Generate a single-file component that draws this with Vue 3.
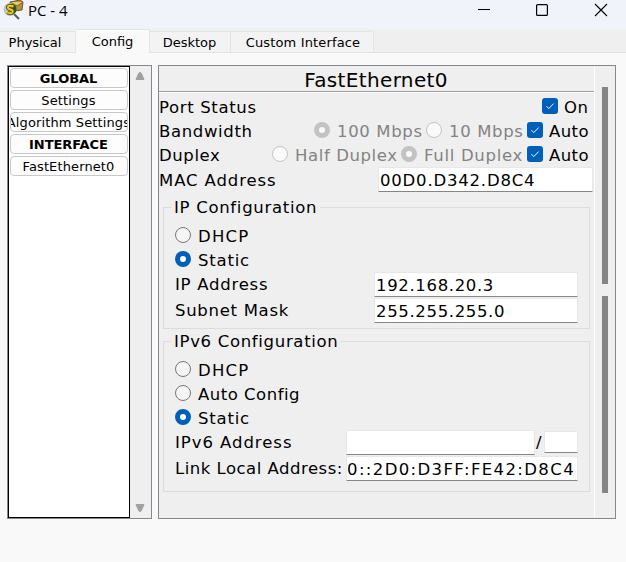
<script setup>
import { ref } from 'vue'

const tabs = ['Physical', 'Config', 'Desktop', 'Custom Interface']
const activeTab = ref('Config')
const menu = [
  { text: 'GLOBAL', heading: true },
  { text: 'Settings' },
  { text: 'Algorithm Settings' },
  { text: 'INTERFACE', heading: true },
  { text: 'FastEthernet0' },
]
</script>

<template>
  <div class="window">
    <header class="titlebar">
      <svg class="app-icon" width="22" height="22" viewBox="0 0 22 22">
        <path d="M7 2 17 0l3 2-1 8-8 1-4-3z" fill="#b8903c" stroke="#4d3c18" stroke-width=".8" />
        <path d="m7 2 7 4 6-4" fill="#e7c675" stroke="#6b5320" stroke-width=".8" />
        <path d="m11 14 5 5" stroke="#555b5e" stroke-width="2" />
        <circle cx="7" cy="9.500" r="6" fill="#c3cebc" stroke="#a3b09c" stroke-width=".7" />
        <path d="M8 4q6 0 5.500 6-1 4-4 4z" fill="#1f5b25" />
        <path d="M10.500 6.500Q5 4.500 4.800 7.500c0 2.500 5.200 1.500 5 4-.2 2.200-3.500 2-5.500 1" fill="none" stroke="#5b4a08" stroke-width="3.600" />
        <path d="M10.500 6.500Q5 4.500 4.800 7.500c0 2.500 5.200 1.500 5 4-.2 2.200-3.500 2-5.500 1" fill="none" stroke="#f0cf20" stroke-width="1.900" />
      </svg>
      <span class="title">PC - 4</span>
      <svg class="controls" width="132" height="20" viewBox="0 0 132 20">
        <path d="M0 9.500h12" stroke="#000" fill="none" />
        <rect x="58.600" y="4.600" width="10.800" height="10.800" rx="1" stroke="#000" stroke-width="1.200" fill="none" />
        <path d="m117 4 12 12m0-12-12 12" stroke="#000" stroke-width="1.100" fill="none" />
      </svg>
    </header>

    <nav class="tabs">
      <div v-for="(t, i) in tabs" :key="t" :class="['tab', 'tab-' + i, { active: t === activeTab }]">{{ t }}</div>
    </nav>

    <main class="body">
      <aside class="side">
        <div class="list">
          <div v-for="m in menu" :key="m.text" :class="['item', { heading: m.heading }]"><span>{{ m.text }}</span></div>
        </div>
        <div class="side-scroll">
          <svg width="10" height="8" viewBox="0 0 10 8"><path d="M1 7.500 4 .8h2l3 6.700z" fill="#a0a0a0" stroke="#a0a0a0" stroke-linejoin="round" /></svg>
          <svg width="10" height="8" viewBox="0 0 10 8"><path d="M1 .5 4 7.200h2L9 .5z" fill="#a0a0a0" stroke="#a0a0a0" stroke-linejoin="round" /></svg>
        </div>
      </aside>

      <section class="panel">
        <div class="form">
          <h1 class="heading-bar"><span>FastEthernet0</span></h1>
          <div class="row first">
            <span class="w-port">Port Status</span>
            <div class="right">
              <i class="check"><svg viewBox="0 0 16 16"><path d="m4.500 8.200 2.300 2.400 4.800-5" /></svg></i>
              <span class="lbl on">On</span>
            </div>
          </div>
          <div class="row">
            <span class="w-band">Bandwidth</span>
            <div class="right">
              <i class="radio off sel"></i><span class="lbl dim m100">100 Mbps</span>
              <i class="radio off"></i><span class="lbl dim m10">10 Mbps</span>
              <i class="check"><svg viewBox="0 0 16 16"><path d="m4.500 8.200 2.300 2.400 4.800-5" /></svg></i><span class="lbl auto">Auto</span>
            </div>
          </div>
          <div class="row">
            <span class="w-dup">Duplex</span>
            <div class="right">
              <i class="radio off"></i><span class="lbl dim half">Half Duplex</span>
              <i class="radio off sel"></i><span class="lbl dim full">Full Duplex</span>
              <i class="check"><svg viewBox="0 0 16 16"><path d="m4.500 8.200 2.300 2.400 4.800-5" /></svg></i><span class="lbl auto">Auto</span>
            </div>
          </div>
          <div class="row mac">
            <span class="w-mac">MAC Address</span>
            <div class="field f-mac"><span>00D0.D342.D8C4</span></div>
          </div>

          <fieldset class="group g4">
            <legend>IP Configuration</legend>
            <div class="opt"><i class="radio"></i><span class="dhcp">DHCP</span></div>
            <div class="opt"><i class="radio sel"></i><span class="static">Static</span></div>
            <div class="line"><span class="w-ip">IP Address</span><div class="field f-ip"><span>192.168.20.3</span></div></div>
            <div class="line"><span class="w-mask">Subnet Mask</span><div class="field f-ip"><span>255.255.255.0</span></div></div>
          </fieldset>

          <fieldset class="group g6">
            <legend>IPv6 Configuration</legend>
            <div class="opt"><i class="radio"></i><span class="dhcp">DHCP</span></div>
            <div class="opt"><i class="radio"></i><span class="autoconf">Auto Config</span></div>
            <div class="opt"><i class="radio sel"></i><span class="static">Static</span></div>
            <div class="line">
              <span class="w-six">IPv6 Address</span>
              <div class="pair"><div class="field f-six"></div><span class="slash">/</span><div class="field f-prefix"></div></div>
            </div>
            <div class="line"><span class="w-link">Link Local Address:</span><div class="field f-link"><span>0::2D0:D3FF:FE42:D8C4</span></div></div>
          </fieldset>
        </div>
        <div class="scroll"><i class="thumb"></i><i class="thumb"></i></div>
      </section>
    </main>
  </div>
</template>

<style>
body { margin: 0; background: #f9f9f9; }
</style>

<style scoped>
* { box-sizing: border-box; }
.window { width: 626px; height: 562px; overflow: hidden; background: #f9f9f9; color: #000; font-family: "DejaVu Sans", sans-serif; font-size: 16.5px; letter-spacing: .4px; white-space: nowrap; }
.titlebar { height: 29px; background: #f0f3fa; display: flex; align-items: flex-start; padding-left: 3px; }
.title { font: 15px/20px "Open Sans", sans-serif; letter-spacing: 0; margin-left: 3px; }
.controls { margin-left: auto; margin-right: 16px; }
.tabs { height: 24px; background: #efefef; border-bottom: 1px solid #e2e2e2; display: flex; align-items: flex-end; font-size: 13px; letter-spacing: 0; }
.tab { height: 21px; line-height: 22px; text-align: center; border-top: 1px solid #e5e5e5; border-right: 1px solid #e5e5e5; background: #f3f3f3; }
.tab.active { height: 24px; margin-bottom: -1px; background: #f9f9f9; line-height: 23px; }
.tab-0 { width: 76px; padding-right: 5px; }
.tab-1 { width: 74px; }
.tab-2 { width: 81px; padding-right: 1px; }
.tab-3 { width: 143px; letter-spacing: .15px; padding-left: 2px; }
.body { display: flex; gap: 6px; padding: 12px 10px 0 7px; }
.side { width: 145px; height: 454px; border: 1px solid #828790; background: #efefef; display: flex; }
.list { width: 122px; border: 1px solid #000; background: #fff; padding: 1px; display: flex; flex-direction: column; gap: 2px; }
.item { height: 20px; border: 1px solid #c8c8c8; border-radius: 4px; background: #fdfdfd; font-size: 13px; letter-spacing: .12px; line-height: 19px; display: flex; justify-content: center; overflow: hidden; padding-right: 1px; }
.heading { font-weight: bold; letter-spacing: -.05px; }
.side-scroll { flex: 1; display: flex; flex-direction: column; justify-content: space-between; align-items: center; padding: 6px 1px 6px 0; }
.panel { width: 458px; height: 454px; border: 1px solid #828790; background: #efefef; display: flex; }
.form { width: 436px; border-right: 1px solid #fff; }
.heading-bar { margin: 0; height: 27px; border-bottom: 1px solid #fff; box-shadow: inset 0 -1px #a0a0a0; font-size: 20px; font-weight: normal; letter-spacing: .35px; line-height: 28px; text-align: center; padding-right: 1px; }
.row { height: 24px; display: flex; align-items: center; justify-content: space-between; line-height: 24px; padding-right: 5px; }
.row > span { padding-top: 1px; }
.first { margin-top: 2px; }
.first .check { margin-bottom: 2px; }
.mac { height: 25px; padding-right: 1px; }
.mac > span { padding-top: 2px; }
.w-port { letter-spacing: .65px; }
.w-band { letter-spacing: .65px; }
.w-dup { letter-spacing: .6px; }
.w-mac { letter-spacing: .9px; }
.right { display: flex; align-items: center; }
.right .check, .right .radio { position: relative; top: -1px; }
.first .check { top: 0; }
.lbl { padding-left: 6px; padding-top: 1px; }
.on { width: 31px; }
.auto { width: 46px; }
.dim { color: #838383; padding-left: 7px; }
.m100 { width: 96px; letter-spacing: .65px; }
.m10 { width: 85px; letter-spacing: .65px; }
.half { width: 113px; letter-spacing: .6px; }
.full { width: 110px; letter-spacing: .7px; }
.radio { flex: none; width: 16px; height: 16px; border-radius: 50%; border: 1px solid #777; background: #f5f5f5; }
.radio.sel { border: 5px solid #005fb8; background: #fff; }
.radio.off { border-color: #c3c3c3; background: #fafafa; }
.check { flex: none; width: 16px; height: 16px; border-radius: 3px; background: #005fb8; }
.check svg { display: block; width: 16px; height: 16px; fill: none; stroke: #fff; stroke-width: 1; }
.field { height: 25px; background: #fff; border: 1px solid #e8e8e8; border-bottom-color: #868686; border-radius: 1px; padding-left: 2px; line-height: 25px; overflow: hidden; }
.f-mac { width: 215px; padding-left: 1px; letter-spacing: .8px; }
.f-ip { width: 204px; padding-left: 1px; letter-spacing: .65px; }
.f-link { width: 232px; padding-left: 0; letter-spacing: 1.38px; }
.f-six { width: 189px; }
.f-prefix { width: 34px; height: 22px; }
.pair { display: flex; align-items: center; }
.slash { width: 9px; padding-left: 1px; padding-top: 1px; }
.group { margin: 0 4px; border: 1px solid #dcdcdc; padding: 0 11px; min-width: 0; }
.group legend { margin-left: -4px; padding: 0 3px; height: 20px; line-height: 21px; }
.g4 legend { letter-spacing: .7px; }
.g6 legend { letter-spacing: .68px; }
.g4 { height: 132px; margin-top: 5px; }
.g6 { height: 161px; margin-top: 2px; }
.opt { height: 24px; display: flex; align-items: center; gap: 7px; line-height: 20px; }
.opt span { padding-top: 3px; }
.opt:nth-of-type(1) { margin-top: 6px; }
.dhcp { letter-spacing: 1.2px; }
.static { letter-spacing: .8px; }
.autoconf { letter-spacing: .5px; }
.line { height: 26px; display: flex; align-items: center; justify-content: space-between; line-height: 25px; }
.line > span { line-height: 22px; padding-top: 2px; }
.w-ip { letter-spacing: .75px; }
.w-mask { letter-spacing: .7px; }
.w-six { letter-spacing: .95px; }
.w-link { letter-spacing: .5px; }
.scroll { flex: 1; display: flex; flex-direction: column; gap: 12px; padding: 21px 0 0 7px; }
.thumb { width: 6px; height: 197px; background: #858585; }
</style>
